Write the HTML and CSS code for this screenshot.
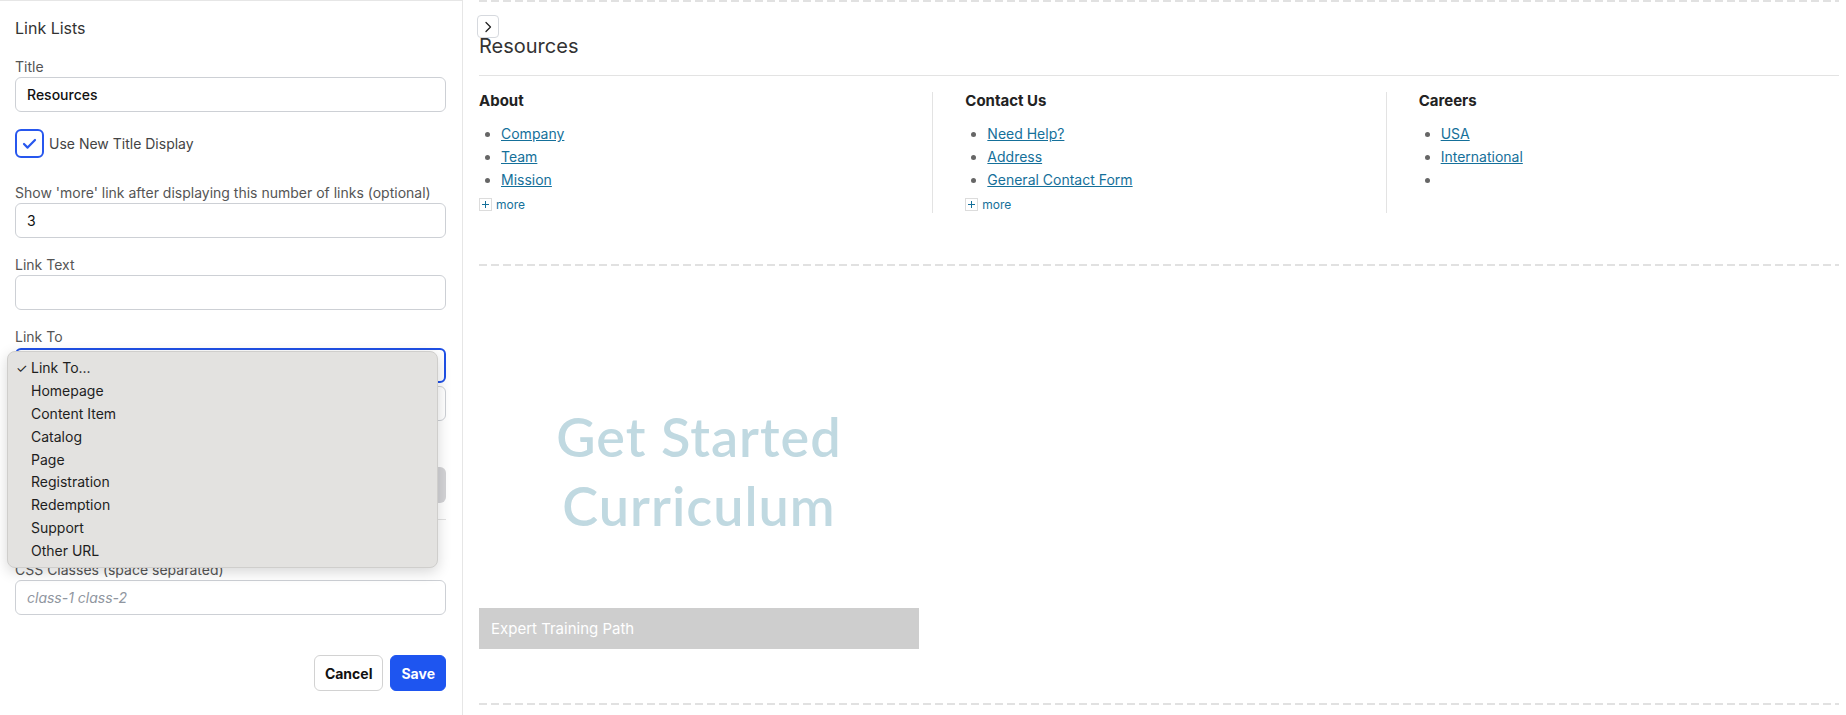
FILE: index.html
```html
<!DOCTYPE html>
<html lang="en">
<head>
  <meta charset="UTF-8" />
  <meta name="viewport" content="width=device-width, initial-scale=1.0"/>
  <title>Link Lists</title>
  <link rel="stylesheet" href="styles.css">
</head>
<body>
  <!-- Editor panel -->
  <aside id="editor">
    <h2 class="editor-title">Link Lists</h2>

    <div class="field">
      <label>Title</label>
      <input class="text-input strong" type="text" value="Resources">
    </div>

    <label class="check-row">
      <span class="checkbox">
        <svg width="17" height="17" viewBox="0 0 17 17"><path d="M3 9l3.6 3.6L14 5" fill="none" stroke="#2757ee" stroke-width="2.2" stroke-linecap="round" stroke-linejoin="round"/></svg>
      </span>
      Use New Title Display
    </label>

    <div class="field">
      <label>Show 'more' link after displaying this number of links (optional)</label>
      <input class="text-input" type="text" value="3">
    </div>

    <div class="field">
      <label>Link Text</label>
      <input class="text-input" type="text">
    </div>

    <div class="field">
      <label>Link To</label>
      <div class="select-box"></div>
      <input class="text-input extra" type="text">
    </div>

    <button class="add-btn">Add Link</button>
    <hr class="divider">

    <div class="field css-field">
      <label>CSS Classes (space separated)</label>
      <input class="text-input" type="text" placeholder="class-1 class-2">
    </div>

    <div class="actions">
      <button class="btn">Cancel</button>
      <button class="btn primary">Save</button>
    </div>

    <!-- Open select menu -->
    <ul class="select-menu">
      <li class="checked">Link To...</li>
      <li>Homepage</li>
      <li>Content Item</li>
      <li>Catalog</li>
      <li>Page</li>
      <li>Registration</li>
      <li>Redemption</li>
      <li>Support</li>
      <li>Other URL</li>
    </ul>
  </aside>

  <!-- Page preview -->
  <main id="canvas">
    <section class="block">
      <button class="collapse-btn">
        <svg width="12" height="12" viewBox="0 0 12 12"><path d="M4 1.5l4.5 4.5L4 10.5" fill="none" stroke="#222" stroke-width="1.3" stroke-linecap="round" stroke-linejoin="round"/></svg>
      </button>
      <h1 class="block-title">Resources</h1>

      <div class="link-columns">
        <div class="link-col">
          <h3>About</h3>
          <ul>
            <li><a href="#">Company</a></li>
            <li><a href="#">Team</a></li>
            <li><a href="#">Mission</a></li>
          </ul>
          <a class="more" href="#"><span class="plus"></span>more</a>
        </div>
        <div class="link-col">
          <h3>Contact Us</h3>
          <ul>
            <li><a href="#">Need Help?</a></li>
            <li><a href="#">Address</a></li>
            <li><a href="#">General Contact Form</a></li>
          </ul>
          <a class="more" href="#"><span class="plus"></span>more</a>
        </div>
        <div class="link-col">
          <h3>Careers</h3>
          <ul>
            <li><a href="#">USA</a></li>
            <li><a href="#">International</a></li>
            <li></li>
          </ul>
        </div>
      </div>
    </section>

    <section class="block promo-block">
      <figure class="promo">
        <div class="promo-image"><span>Get Started<br>Curriculum</span></div>
        <figcaption>Expert Training Path</figcaption>
      </figure>
    </section>
    <div class="block-end"></div>
  </main>
</body>
</html>
```

FILE: styles.css
```css
html, body {
  margin: 0;
  padding: 0;
  font-family: 'Inter', 'Liberation Sans', sans-serif;
  background: white;
  color: #222;
  overflow: hidden;
}

body {
  display: flex;
  align-items: flex-start;
  height: 715px;
}

/* Editor panel */
#editor {
  position: relative;
  box-sizing: border-box;
  width: 463px;
  height: 715px;
  flex-shrink: 0;
  padding: 15px 16px 0 15px;
  border-top: 1px solid #e6e6e6;
  border-right: 1px solid #e6e6e6;
}

.editor-title {
  margin: 0 0 17px;
  font-size: 16px;
  font-weight: 400;
  line-height: 24px;
  color: #333;
}

.field {
  margin-bottom: 17px;
}

.field label {
  display: block;
  font-size: 14px;
  line-height: 20px;
  color: #555;
}

.text-input, .select-box {
  display: block;
  box-sizing: border-box;
  width: 100%;
  height: 35px;
  padding: 0 11px;
  font-family: inherit;
  font-size: 14px;
  color: #111;
  border: 1px solid #cdd0d5;
  border-radius: 6px;
  background: white;
  outline: none;
}

.text-input.strong {
  font-weight: 500;
}

.text-input::placeholder {
  color: #9096a0;
  font-style: italic;
}

.select-box {
  margin-top: 1px;
  border: 2px solid #1f50e6;
}

.text-input.extra {
  margin-top: 3px;
}

.check-row {
  display: flex;
  align-items: center;
  gap: 5px;
  height: 29px;
  margin-bottom: 25px;
  font-size: 14px;
  line-height: 31px;
  color: #444;
}

.checkbox {
  display: flex;
  align-items: center;
  justify-content: center;
  box-sizing: border-box;
  width: 29px;
  height: 29px;
  border: 2px solid #2757ee;
  border-radius: 6px;
}

.add-btn {
  display: block;
  width: 100%;
  height: 36px;
  margin-top: 46px;
  border: none;
  border-radius: 6px;
  background: #d3d3d6;
  color: white;
  font-family: inherit;
  font-size: 14px;
}

.divider {
  margin: 16px 0 0;
  border: none;
  border-top: 1px solid #e2e2e2;
}

.css-field {
  margin-top: 40px;
}

.actions {
  display: flex;
  justify-content: flex-end;
  gap: 7px;
  margin-top: 40px;
}

.btn {
  height: 36px;
  padding: 0 10px;
  border: 1px solid #d2d2d2;
  border-radius: 6px;
  background: white;
  color: #111;
  font-family: inherit;
  font-size: 14px;
  font-weight: 700;
}

.btn.primary {
  border-color: #1e55f0;
  background: #1e55f0;
  color: white;
}

.select-menu {
  position: absolute;
  top: 350px;
  left: 7px;
  box-sizing: border-box;
  width: 431px;
  height: 217px;
  margin: 0;
  padding: 5px 0 4px;
  list-style: none;
  background: #e3e2e0;
  border: 1px solid #cfcecc;
  border-radius: 8px;
  box-shadow: 0 4px 14px rgba(0, 0, 0, 0.16);
}

.select-menu li {
  position: relative;
  height: 22.9px;
  padding-left: 23px;
  font-size: 14px;
  line-height: 22px;
  color: #1e1e1e;
}

.select-menu li.checked::before {
  content: "✓";
  position: absolute;
  left: 8px;
  font-size: 13px;
}

/* Page preview */
#canvas {
  flex: 1;
  padding: 0 7px 0 16px;
}

.block {
  position: relative;
  padding-top: 2px;
  background: repeating-linear-gradient(90deg, #e1e1e1 0 8px, transparent 8px 12px) top left / 100% 2px no-repeat;
}

.block-end {
  height: 2px;
  background: repeating-linear-gradient(90deg, #e1e1e1 0 8px, transparent 8px 12px);
}

.collapse-btn {
  position: absolute;
  top: 15px;
  left: -2px;
  display: flex;
  align-items: center;
  justify-content: center;
  box-sizing: border-box;
  width: 22px;
  height: 23px;
  padding: 0;
  border: 1px solid #d6d9de;
  border-radius: 4px;
  background: white;
}

.block-title {
  margin: 30px 0 0;
  padding-bottom: 15px;
  border-bottom: 1px solid #e3e3e3;
  font-size: 20px;
  font-weight: 400;
  line-height: 28px;
  color: #333;
}

.link-columns {
  display: grid;
  grid-template-columns: repeat(3, 1fr);
  margin-top: 16px;
  padding-bottom: 51px;
}

.link-col {
  padding-bottom: 1px;
}

.link-col + .link-col {
  padding-left: 32px;
  border-left: 1px solid #e3e3e3;
}

.link-col h3 {
  margin: 0;
  font-size: 15px;
  font-weight: 700;
  line-height: 18px;
  color: #222;
}

.link-col ul {
  margin: 12px 0 0;
  padding-left: 22px;
}

.link-col li {
  height: 23px;
  font-size: 14px;
  line-height: 23px;
}

.link-col li::marker {
  color: #666;
}

.link-col a {
  color: #15709a;
}

.more {
  display: flex;
  align-items: center;
  gap: 4px;
  margin-top: 5px;
  height: 16px;
  font-size: 12px;
  text-decoration: none;
}

.plus {
  position: relative;
  box-sizing: border-box;
  width: 13px;
  height: 13px;
  border: 1px solid #dcdcdc;
}

.plus::before, .plus::after {
  content: "";
  position: absolute;
  background: #15709a;
}

.plus::before {
  left: 2px;
  top: 5px;
  width: 7px;
  height: 1px;
}

.plus::after {
  left: 5px;
  top: 2px;
  width: 1px;
  height: 7px;
}

.promo-block {
  padding-bottom: 54px;
}

.promo {
  width: 440px;
  margin: 0;
}

.promo-image {
  box-sizing: border-box;
  height: 342px;
  padding-top: 136px;
  text-align: center;
  font-family: 'Lato', 'Open Sans', sans-serif;
  font-size: 54px;
  font-weight: 600;
  letter-spacing: 1px;
  line-height: 69px;
  color: #c0d9e1;
}

.promo figcaption {
  height: 41px;
  padding-left: 12px;
  background: #cecece;
  color: white;
  font-size: 15px;
  line-height: 41px;
}
```
